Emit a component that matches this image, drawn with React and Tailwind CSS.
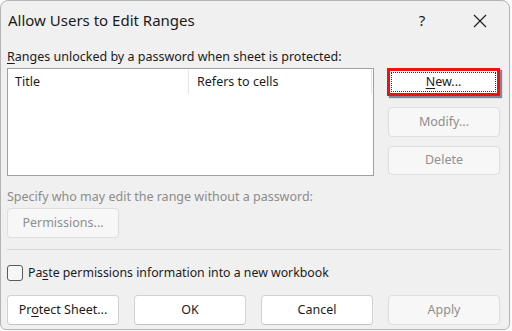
import React from 'react';

const font = { fontFamily: '"Noto Sans", "Open Sans", sans-serif' };

const Btn = ({ children, disabled, className = '' }) => (
  <div
    className={`flex items-center justify-center rounded-[4px] border text-[12.5px] ${
      disabled
        ? 'border-[#dedede] bg-[#f7f7f7] text-[#8f8f8f]'
        : 'border-[#d2d2d2] border-b-[#c2c2c2] bg-white text-[#1b1b1b]'
    } ${className}`}
  >
    {children}
  </div>
);

const App = () => {
  return (
    <div className="w-[512px] h-[331px] bg-[#fafafa] overflow-hidden" style={font}>
      <div className="w-[510px] h-[330px] rounded-t-[8px] rounded-b-[6px] border border-[#b4b4b4] bg-[#f0f0f0] flex flex-col">
        {/* title bar */}
        <div className="h-[39px] flex items-center pl-[7px] text-[15px] text-[#1a1a1a]">
          <span className="flex-1">Allow Users to Edit Ranges</span>
          <span className="w-[20px] text-center mr-[41px] text-[15px]">?</span>
          <svg width="14" height="14" viewBox="0 0 14 14" className="mr-[22px]">
            <path d="M1 1 L13 13 M13 1 L1 13" stroke="#1a1a1a" strokeWidth="1.1" />
          </svg>
        </div>

        <div className="px-[6px] flex flex-col">
          <div className="mt-[8px] h-[17px] leading-[17px] text-[12.5px] text-[#1b1b1b]">
            <span className="underline underline-offset-2">R</span>anges unlocked by a password when sheet is protected:
          </div>

          <div className="mt-[3px] flex">
            <div className="w-[367px] h-[108px] border border-[#a0a0a0] bg-white">
              <div className="flex h-[26px] text-[12.5px] text-[#1b1b1b]">
                <div className="w-[181px] pl-[7px] flex items-center border-r border-[#e3e3e3] my-[1px]">Title</div>
                <div className="flex-1 pl-[8px] flex items-center border-r border-[#e3e3e3] my-[1px] mr-[1px]">Refers to cells</div>
              </div>
            </div>

            <div className="ml-[13px] flex flex-col">
              <div className="w-[113px] h-[28px] border-[3px] border-[#ee1111] bg-white shadow-[2px_2px_1px_rgba(40,50,80,0.55)] p-[1px]">
                <div className="h-full border border-dotted border-[#333] flex items-center justify-center text-[12.5px] text-[#1b1b1b]">
                  <span><span className="underline underline-offset-2">N</span>ew...</span>
                </div>
              </div>
              <Btn disabled className="mt-[11px] ml-[1px] w-[112px] h-[30px]">Modify...</Btn>
              <Btn disabled className="mt-[9px] ml-[1px] w-[112px] h-[29px]">Delete</Btn>
            </div>
          </div>

          <div className="mt-[12px] h-[17px] leading-[17px] text-[12.5px] text-[#8c8c8c]">
            Specify who may edit the range without a password:
          </div>
          <Btn disabled className="mt-[3px] w-[112px] h-[30px]">Permissions...</Btn>

          <div className="mt-[11px] h-px w-[495px] bg-[#d9d9d9]" />

          <div className="mt-[15px] h-[16px] flex items-center">
            <div className="w-[16px] h-[16px] rounded-[3px] border border-[#5a5a5a] bg-[#f6f6f6]" />
            <span className="ml-[5px] text-[12.3px] text-[#1b1b1b]">
              Pa<span className="underline underline-offset-2">s</span>te permissions information into a new workbook
            </span>
          </div>

          <div className="mt-[14px] flex">
            <Btn className="w-[112px] h-[30px]">
              <span>Pr<span className="underline underline-offset-2">o</span>tect Sheet...</span>
            </Btn>
            <Btn className="ml-[15px] w-[112px] h-[30px]">OK</Btn>
            <Btn className="ml-[15px] w-[112px] h-[30px]">Cancel</Btn>
            <Btn disabled className="ml-[15px] w-[112px] h-[30px]">Apply</Btn>
          </div>
        </div>
      </div>
    </div>
  );
};

export default App;
